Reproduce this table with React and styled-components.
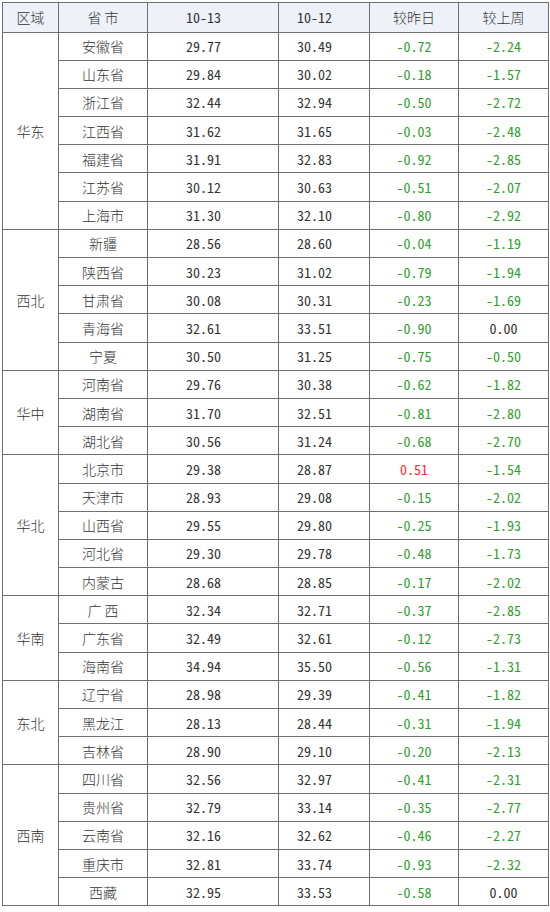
import React from 'react';
import styled, { createGlobalStyle } from 'styled-components';

const GlobalStyle = createGlobalStyle`
  body {
    margin: 0;
    background: #fff;
    font-family: "Noto Sans CJK SC", "Noto Sans", sans-serif;
  }
`;

const Wrap = styled.div`
  padding: 2px;
`;

const Table = styled.table`
  width: 546px;
  border-collapse: collapse;
  table-layout: fixed;
  border: 1px solid #6f6f6f;
  color: #333;
  font-size: 14px;
  font-weight: 300;
`;

const HeadRow = styled.tr`
  height: 29.5px;
  background: #eef2f8;
`;

const Row = styled.tr`
  height: 28.2px;
`;

const Cell = styled.td`
  border: 1px solid #6f6f6f;
  padding: 0;
  padding-right: ${(p) => (p.$shift ? '19px' : '0')};
  text-align: center;
  vertical-align: middle;
  line-height: 16px;
  white-space: pre;
  font-family: ${(p) =>
    p.$num
      ? '"Noto Sans Mono CJK SC", "DejaVu Sans Mono", monospace'
      : '"Noto Sans CJK SC", "Noto Sans", sans-serif'};
  color: ${(p) => (p.$tone === 'up' ? '#ff2b2b' : p.$tone === 'down' ? '#2f9e2f' : '#333')};
`;

const HeadCell = styled(Cell).attrs({ as: 'th' })`
  font-weight: 300;
`;

const regions = [
  ['华东', [
    ['安徽省', '29.77', '30.49', '-0.72', '-2.24'],
    ['山东省', '29.84', '30.02', '-0.18', '-1.57'],
    ['浙江省', '32.44', '32.94', '-0.50', '-2.72'],
    ['江西省', '31.62', '31.65', '-0.03', '-2.48'],
    ['福建省', '31.91', '32.83', '-0.92', '-2.85'],
    ['江苏省', '30.12', '30.63', '-0.51', '-2.07'],
    ['上海市', '31.30', '32.10', '-0.80', '-2.92'],
  ]],
  ['西北', [
    ['新疆', '28.56', '28.60', '-0.04', '-1.19'],
    ['陕西省', '30.23', '31.02', '-0.79', '-1.94'],
    ['甘肃省', '30.08', '30.31', '-0.23', '-1.69'],
    ['青海省', '32.61', '33.51', '-0.90', '0.00'],
    ['宁夏', '30.50', '31.25', '-0.75', '-0.50'],
  ]],
  ['华中', [
    ['河南省', '29.76', '30.38', '-0.62', '-1.82'],
    ['湖南省', '31.70', '32.51', '-0.81', '-2.80'],
    ['湖北省', '30.56', '31.24', '-0.68', '-2.70'],
  ]],
  ['华北', [
    ['北京市', '29.38', '28.87', '0.51', '-1.54'],
    ['天津市', '28.93', '29.08', '-0.15', '-2.02'],
    ['山西省', '29.55', '29.80', '-0.25', '-1.93'],
    ['河北省', '29.30', '29.78', '-0.48', '-1.73'],
    ['内蒙古', '28.68', '28.85', '-0.17', '-2.02'],
  ]],
  ['华南', [
    ['广 西', '32.34', '32.71', '-0.37', '-2.85'],
    ['广东省', '32.49', '32.61', '-0.12', '-2.73'],
    ['海南省', '34.94', '35.50', '-0.56', '-1.31'],
  ]],
  ['东北', [
    ['辽宁省', '28.98', '29.39', '-0.41', '-1.82'],
    ['黑龙江', '28.13', '28.44', '-0.31', '-1.94'],
    ['吉林省', '28.90', '29.10', '-0.20', '-2.13'],
  ]],
  ['西南', [
    ['四川省', '32.56', '32.97', '-0.41', '-2.31'],
    ['贵州省', '32.79', '33.14', '-0.35', '-2.77'],
    ['云南省', '32.16', '32.62', '-0.46', '-2.27'],
    ['重庆市', '32.81', '33.74', '-0.93', '-2.32'],
    ['西藏', '32.95', '33.53', '-0.58', '0.00'],
  ]],
];

const tone = (v) => {
  const n = parseFloat(v);
  if (n > 0) return 'up';
  if (n < 0) return 'down';
  return undefined;
};

const App = () => (
  <Wrap>
    <GlobalStyle />
    <Table>
      <colgroup>
        <col style={{ width: 56 }} />
        <col style={{ width: 89 }} />
        <col style={{ width: 131 }} />
        <col style={{ width: 91 }} />
        <col style={{ width: 89 }} />
        <col style={{ width: 90 }} />
      </colgroup>
      <thead>
        <HeadRow>
          <HeadCell>区域</HeadCell>
          <HeadCell>省 市</HeadCell>
          <HeadCell $shift $num>10-13</HeadCell>
          <HeadCell $shift $num>10-12</HeadCell>
          <HeadCell>较昨日</HeadCell>
          <HeadCell>较上周</HeadCell>
        </HeadRow>
      </thead>
      <tbody>
        {regions.map(([name, rows]) =>
          rows.map(([prov, today, prev, day, week], i) => (
            <Row key={prov}>
              {i === 0 && <Cell rowSpan={rows.length}>{name}</Cell>}
              <Cell>{prov}</Cell>
              <Cell $shift $num>{today}</Cell>
              <Cell $shift $num>{prev}</Cell>
              <Cell $num $tone={tone(day)}>{day}</Cell>
              <Cell $num $tone={tone(week)}>{week}</Cell>
            </Row>
          ))
        )}
      </tbody>
    </Table>
  </Wrap>
);

export default App;
